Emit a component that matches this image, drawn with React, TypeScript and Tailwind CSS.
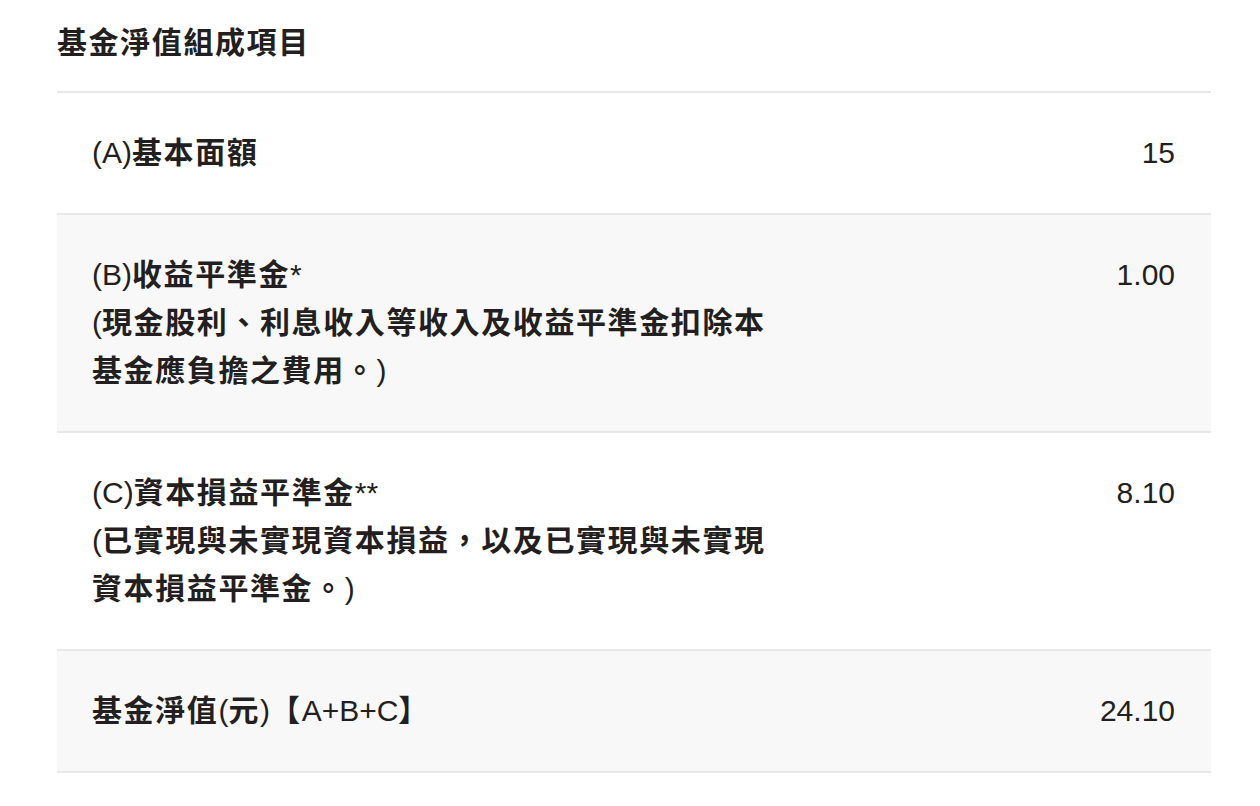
const rows = [
  { label: ['(A)基本面額'], value: '15', shaded: false },
  {
    label: ['(B)收益平準金*', '(現金股利、利息收入等收入及收益平準金扣除本', '基金應負擔之費用。)'],
    value: '1.00',
    shaded: true,
  },
  {
    label: ['(C)資本損益平準金**', '(已實現與未實現資本損益，以及已實現與未實現', '資本損益平準金。)'],
    value: '8.10',
    shaded: false,
  },
  { label: ['基金淨值(元)【A+B+C】'], value: '24.10', shaded: true },
]

// CJK runs get the heavier weight, latin stays regular like the original
function Mixed({ text }: { text: string }) {
  const parts = text.split(/([\u3000-\u9fff\uff00-\uffef]+)/)
  return (
    <>
      {parts.map((p, i) =>
        /[\u3000-\u9fff\uff00-\uffef]/.test(p) ? (
          <span key={i} className="font-bold">
            {p}
          </span>
        ) : (
          <span key={i} className="font-normal tracking-normal">
            {p}
          </span>
        )
      )}
    </>
  )
}

export default function App() {
  return (
    <div
      className="min-h-screen bg-white px-[49px] text-[#231f20]"
      style={{ fontFamily: '"Liberation Sans", "Noto Sans CJK TC", sans-serif' }}
    >
      <h2 className="pt-[19px] pb-[24px] pl-[8px] text-[30px] leading-[48px] tracking-[1.6px]">
        <Mixed text="基金淨值組成項目" />
      </h2>
      <div className="ml-[8px] w-[1154px] border-b-2 border-[#e8e8ea]">
        {rows.map((row, i) => (
          <div
            key={i}
            className={`flex justify-between border-t-2 border-[#e8e8ea] pl-[35px] pr-[36px] pt-[36px] pb-[36px] ${
              row.shaded ? 'bg-[#f8f8f8]' : 'bg-white'
            }`}
          >
            <div className="text-[30px] leading-[48px] tracking-[1.6px]">
              {row.label.map((line, j) => (
                <div key={j}>
                  <Mixed text={line} />
                </div>
              ))}
            </div>
            <div className="text-[30px] leading-[48px] font-normal">{row.value}</div>
          </div>
        ))}
      </div>
    </div>
  )
}
